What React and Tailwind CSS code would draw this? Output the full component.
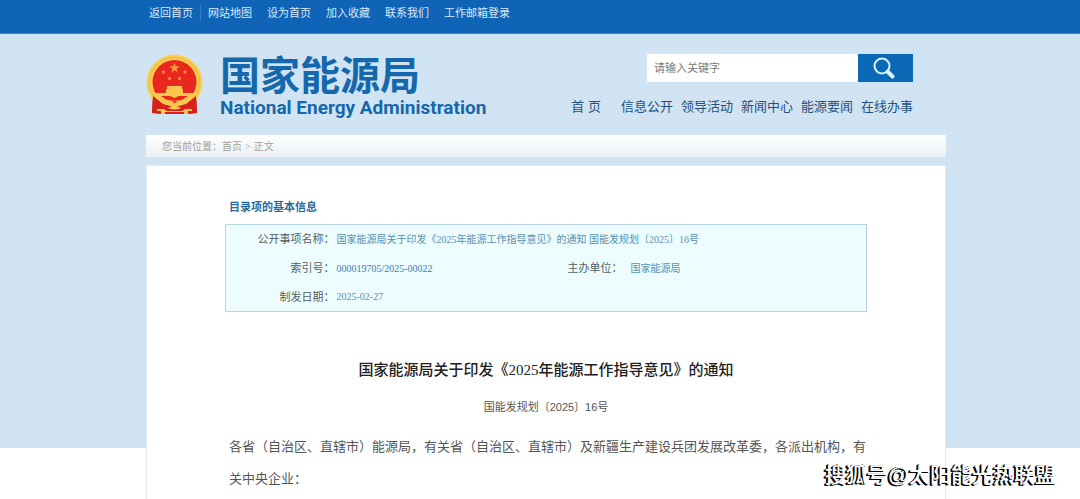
const topLinks = ["返回首页", "网站地图", "设为首页", "加入收藏", "联系我们", "工作邮箱登录"];
const navLinks = ["信息公开", "领导活动", "新闻中心", "能源要闻", "在线办事"];

function Star({ x, y, r }) {
  const points = Array.from({ length: 10 }, (_, i) => {
    const d = i % 2 ? r * 0.4 : r;
    const a = (Math.PI / 5) * i - Math.PI / 2;
    return `${x + d * Math.cos(a)},${y + d * Math.sin(a)}`;
  }).join(" ");
  return <polygon points={points} fill="#fb9b3a" />;
}

function Emblem() {
  return (
    <svg viewBox="0 0 57 62" className="h-[62px] w-[57px] shrink-0" role="img" aria-label="国徽">
      <path d="M7 42 L6 59 L17 60 H40 L51 59 L50 42 Z" fill="#d8201c" />
      <circle cx="28.500" cy="28.500" r="28" fill="#f8cf58" />
      <circle cx="28.500" cy="28.500" r="25" fill="none" stroke="#f5bf45" strokeWidth="2" />
      <circle cx="28.500" cy="28" r="22" fill="#e8281f" />
      <path d="M7 42 L17 50 L28.500 53 L40 50 L50 42 L51 59 L40 60 H17 L6 59 Z" fill="#d8201c" />
      <path d="M8 39 H49 L46 45 L37 50 L28.500 47 L20 50 L11 45 Z" fill="#fbc64b" />
      <path d="M20 40 V35 H21 V32 H36 V35 H37 V40 Z" fill="#fbc64b" />
      <path d="M15 42 H24 L28.500 44 L33 42 H42 L36 46 L28.500 47 L21 46 Z" fill="#e8281f" />
      <path d="M15 45 Q22 46 28.500 49 Q35 46 42 45 Q38 51 31 52 L35 54 Q28.500 57 22 54 L26 52 Q19 51 15 45 Z" fill="#fbc64b" />
      <path d="M11 55 H18 L21 57 H36 L39 55 H46 V57 H42 V60 H38 V58 H19 V60 H15 V57 H11 Z" fill="#fbc64b" />
      <Star x={28.5} y={14} r={5.5} />
      <Star x={17.5} y={18} r={2.6} />
      <Star x={39} y={18} r={2.6} />
      <Star x={23.5} y={24.5} r={2.6} />
      <Star x={33.5} y={24.5} r={2.6} />
    </svg>
  );
}

function SearchIcon() {
  return (
    <svg viewBox="0 0 24 24" className="size-6" fill="none" stroke="#d5f2ff" aria-hidden="true">
      <circle cx="10" cy="10" r="7.500" strokeWidth="2" />
      <path d="M15.500 15.500 L20.500 20.500" strokeWidth="4" strokeLinecap="round" />
    </svg>
  );
}

const labelCell = "w-[109px] p-0 text-right text-[11px] font-normal text-[#555f63]";
const valueCell = "p-0 pl-0.5 text-left text-[10px] text-[#5b8fae]";

export default function App() {
  return (
    <div className="relative min-h-screen overflow-hidden bg-white bg-[repeating-linear-gradient(90deg,#ffffff0c_0_1px,transparent_1px_4px),repeating-linear-gradient(#ffffff0c_0_1px,transparent_1px_4px),linear-gradient(#cfe3f3,#cfe3f3)] bg-[length:100%_448px] bg-no-repeat font-['Liberation_Serif','Noto_Sans_CJK_SC',serif]">
      <div className="h-[34px] border-b border-[#3d83c6] bg-[#0f64b7] pl-3">
        <nav aria-label="快捷链接" className="mx-auto flex max-w-[800px] px-[3px] pt-[5px]">
          {topLinks.map((t, i) => (
            <a key={t} href="#" className={`${i ? "border-l pl-[7px]" : ""} ${i === 1 ? "border-[#3478c0]" : "border-transparent"} mr-[7px] text-[11px] leading-4 whitespace-nowrap text-[#d9e9f8]`}>
              {t}
            </a>
          ))}
        </nav>
      </div>

      <div className="pl-3">
        <div className="mx-auto max-w-[800px]">
          <header className="flex h-[101px] justify-between pr-[33px]">
            <a href="#" className="flex gap-[17px] pt-5">
              <Emblem />
              <span className="block text-[#1668ad]">
                <span className="block font-['Liberation_Sans','Noto_Sans_CJK_SC',sans-serif] text-[40px] leading-[44px] font-bold">国家能源局</span>
                <span className="block font-['Roboto',sans-serif] text-[19px] leading-5 font-bold whitespace-nowrap">National Energy Administration</span>
              </span>
            </a>
            <div className="flex flex-col items-end gap-4 pt-5 font-['Liberation_Sans','Noto_Sans_CJK_SC',sans-serif]">
              <form className="flex" onSubmit={(e) => e.preventDefault()}>
                <input
                  type="text"
                  aria-label="请输入关键字"
                  placeholder="请输入关键字"
                  className="h-7 w-[211px] bg-white px-[7px] text-[11px] outline-none placeholder:text-[#7a7a7a]"
                />
                <button type="submit" aria-label="搜索" className="flex h-7 w-[55px] items-center justify-center bg-[#0a68b5] pr-1">
                  <SearchIcon />
                </button>
              </form>
              <nav aria-label="主导航" className="flex gap-2 text-[13px] leading-[18px] whitespace-nowrap text-[#24527c]">
                <a href="#" className="mr-3">首 页</a>
                {navLinks.map((t) => (
                  <a key={t} href="#">{t}</a>
                ))}
              </nav>
            </div>
          </header>

          <nav aria-label="当前位置" className="flex h-[22px] items-center bg-gradient-to-b from-white to-[#ebf0f4] px-4 text-[10px] text-[#a0a294]">
            <span>您当前位置：</span>
            <a href="#">首页</a>
            <span className="px-[3px]">&gt;</span>
            <span>正文</span>
          </nav>

          <main className="mt-2 min-h-[334px] border border-b-0 border-[#e4eaee] bg-white px-[78px] pt-[33px]">
            <h2 className="pl-1 text-[11px] leading-4 font-bold text-[#2a6a9a]">目录项的基本信息</h2>
            <table className="mt-[9px] w-full border border-[#b5d3e4] bg-[#ecfcff]">
              <tbody>
                <tr className="h-[29px]">
                  <th scope="row" className={labelCell}>公开事项名称：</th>
                  <td colSpan={3} className={valueCell}>
                    国家能源局关于印发《2025年能源工作指导意见》的通知 国能发规划〔2025〕16号
                  </td>
                </tr>
                <tr className="h-[29px]">
                  <th scope="row" className={labelCell}>索引号：</th>
                  <td className="w-[233px] p-0 pl-0.5 text-left text-[10px] text-[#3f7fa8]">000019705/2025-00022</td>
                  <th scope="row" className="w-[55px] p-0 text-left text-[11px] font-normal whitespace-nowrap text-[#555f63]">主办单位：</th>
                  <td className="p-0 pl-2 text-[10px] text-[#5b8fae]">国家能源局</td>
                </tr>
                <tr className="h-[29px]">
                  <th scope="row" className={labelCell}>制发日期：</th>
                  <td colSpan={3} className={valueCell}>2025-02-27</td>
                </tr>
              </tbody>
            </table>
            <h1 className="mt-[46px] text-center text-[15px] leading-6 font-medium text-[#222]">
              国家能源局关于印发《2025年能源工作指导意见》的通知
            </h1>
            <p className="mt-[17px] text-center font-['Liberation_Sans','Noto_Sans_CJK_SC',sans-serif] text-[11px] leading-4 text-[#555]">国能发规划〔2025〕16号</p>
            <p className="mt-4 pl-1 text-[13px] leading-8 text-[#555]">
              各省（自治区、直辖市）能源局，有关省（自治区、直辖市）及新疆生产建设兵团发展改革委，各派出机构，有关中央企业：
            </p>
          </main>
        </div>
      </div>

      <div className="absolute right-6 bottom-3 font-['Liberation_Sans','Noto_Sans_CJK_SC',sans-serif] text-[21px] leading-6 font-medium whitespace-nowrap text-white [text-shadow:-1px_0_0_#000,-1px_1px_0_#000,-2px_1px_0_#000]">
        搜狐号@太阳能光热联盟
      </div>
    </div>
  );
}
